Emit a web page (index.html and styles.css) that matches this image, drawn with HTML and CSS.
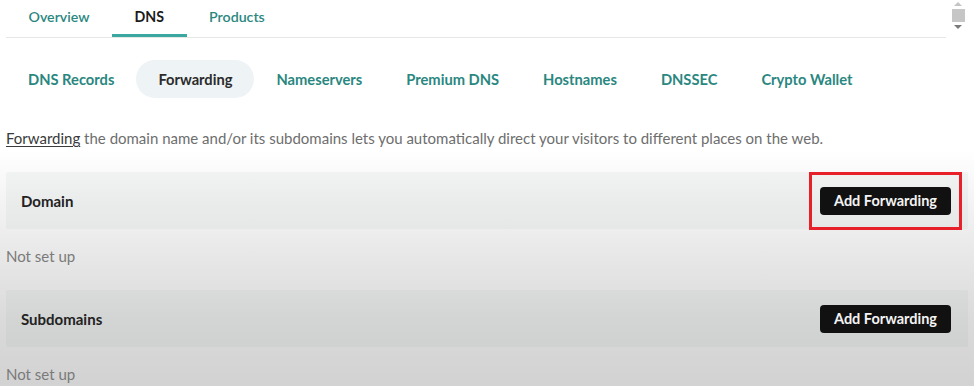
FILE: index.html
```html
<!DOCTYPE html>
<html>
<head>
<meta charset="utf-8">
<link rel="stylesheet" href="styles.css">
</head>
<body>
<div class="page">
  <nav class="top-tabs">
    <span class="tab">Overview</span>
    <span class="tab active">DNS</span>
    <span class="tab">Products</span>
  </nav>
  <div class="scrollbar">
    <span class="arrow up"></span>
    <span class="thumb"></span>
    <span class="arrow down"></span>
  </div>
  <nav class="sub-tabs">
    <span class="sub">DNS Records</span>
    <span class="sub active">Forwarding</span>
    <span class="sub">Nameservers</span>
    <span class="sub">Premium DNS</span>
    <span class="sub">Hostnames</span>
    <span class="sub">DNSSEC</span>
    <span class="sub">Crypto Wallet</span>
  </nav>
  <p class="desc"><span class="link">Forwarding</span> the domain name and/or its subdomains lets you automatically direct your visitors to different places on the web.</p>
  <section class="card">
    <span class="card-title">Domain</span>
    <span class="highlight"><button class="btn">Add Forwarding</button></span>
  </section>
  <p class="status">Not set up</p>
  <section class="card">
    <span class="card-title">Subdomains</span>
    <span class="plain"><button class="btn">Add Forwarding</button></span>
  </section>
  <p class="status">Not set up</p>
</div>
</body>
</html>
```
FILE: styles.css
```css
* { box-sizing: border-box; }
html, body { margin: 0; height: 100%; }
body {
  width: 974px;
  height: 386px;
  overflow: hidden;
  font-family: "Lato", "Noto Sans", sans-serif;
  background: linear-gradient(180deg, #ffffff 0px, #ffffff 150px, #ebebeb 240px, #dadada 320px, #d2d2d2 386px);
  color: #1b1b1b;
}
.page {
  position: relative;
  padding: 0 6px;
}
.top-tabs {
  display: flex;
  height: 38px;
  width: 940px;
  border-bottom: 1px solid #e6e6e6;
}
.tab {
  padding: 0 22.5px;
  font-size: 14.2px;
  font-weight: 600;
  color: #2a8780;
  line-height: 34px;
  border-bottom: 3px solid transparent;
}
.tab.active {
  color: #1b1b1b;
  font-weight: 700;
  border-bottom-color: #3aa8a0;
}
.scrollbar {
  position: absolute;
  left: 948px;
  top: 0;
  width: 20px;
  height: 37px;
  display: flex;
  flex-direction: column;
  align-items: center;
  padding-top: 2px;
  gap: 3px;
}
.arrow { width: 0; height: 0; border-left: 4px solid transparent; border-right: 4px solid transparent; }
.arrow.up { border-bottom: 4px solid #c4c4c4; }
.arrow.down { border-top: 4px solid #7a7a7a; }
.thumb { width: 13px; height: 13px; background: #c6c6c6; }
.sub-tabs {
  display: flex;
  margin-top: 22px;
  height: 38px;
}
.sub {
  padding: 0 22px;
  font-size: 14.7px;
  font-weight: 700;
  color: #2a8780;
  line-height: 38px;
  border-radius: 19px;
}
.sub.active {
  color: #2b2b2b;
  background: #eef3f5;
}
.desc {
  margin: 29px 0 0;
  font-size: 15px;
  color: #6e6e6e;
  line-height: 22px;
  white-space: nowrap;
}
.link {
  color: #3a3a3a;
  text-decoration: underline;
  text-underline-offset: 2px;
}
.card {
  margin-top: 23px;
  height: 57px;
  width: 962px;
  display: flex;
  align-items: center;
  justify-content: space-between;
  padding: 0 6px 0 15px;
  background: rgba(125, 140, 140, 0.07);
  border-radius: 2px;
}
.card-title {
  font-size: 15px;
  font-weight: 700;
  color: #222;
}
.highlight {
  border: 3px solid #e8202a;
  padding: 12px 8px;
  display: flex;
}
.plain {
  padding: 0 11px;
  display: flex;
}
.btn {
  width: 131px;
  height: 28px;
  border: none;
  border-radius: 4px;
  background: #111111;
  color: #f4f4f4;
  font-family: "Lato", "Noto Sans", sans-serif;
  font-size: 14.5px;
  font-weight: 700;
  padding: 0;
}
.status {
  margin: 16px 0 0;
  height: 22px;
  line-height: 22px;
  font-size: 15px;
  color: #7a7a7a;
}
.status + .card { margin-top: 23px; }
```
